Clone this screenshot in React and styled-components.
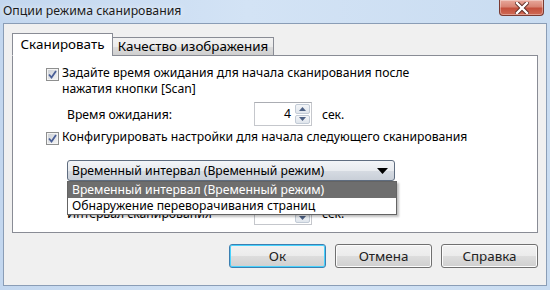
import React from 'react';
import styled, { createGlobalStyle } from 'styled-components';

const GlobalStyle = createGlobalStyle`
  html, body { margin: 0; padding: 0; }
  body {
    width: 550px;
    height: 290px;
    overflow: hidden;
    font-family: "Noto Sans", "Open Sans", sans-serif;
    font-size: 12px;
    color: #000;
  }
`;

const Window = styled.div`
  width: 550px;
  height: 290px;
  box-sizing: border-box;
  display: flex;
  flex-direction: column;
  background: linear-gradient(to right, #c3d7ef 0%, #d3e3f5 45%, #c9dcf1 100%);
`;

const TitleBar = styled.div`
  height: 23px;
  display: flex;
  align-items: flex-start;
  justify-content: space-between;
  padding-left: 3px;
  padding-right: 4px;
`;

const Title = styled.div`
  line-height: 22px;
  font-size: 12.3px;
  color: #1b1b1b;
  text-shadow: 0 0 6px rgba(255, 255, 255, 0.9);
`;

const CloseButton = styled.div`
  width: 43px;
  height: 15px;
  margin-right: 2px;
  border: 1px solid #7a3a31;
  border-top: none;
  border-radius: 0 0 4px 4px;
  background: linear-gradient(to bottom, #e8a89c 0%, #d88373 45%, #c4503d 55%, #cf6a55 100%);
  box-shadow: inset 0 0 0 1px rgba(255, 255, 255, 0.35);
  display: flex;
  align-items: center;
  justify-content: center;
`;

const Client = styled.div`
  flex: 1;
  margin: 0 3px 4px 3px;
  border: 1px solid #8a9db6;
  background: #f0f0f0;
  padding: 9px 8px 0 8px;
  display: flex;
  flex-direction: column;
`;

const TabStrip = styled.div`
  display: flex;
  align-items: flex-end;
  height: 23px;
  position: relative;
  z-index: 1;
`;

const Tab = styled.div`
  box-sizing: border-box;
  height: ${p => (p.$active ? '23px' : '19px')};
  width: ${p => p.$w}px;
  text-align: center;
  border: 1px solid #898c95;
  border-bottom: ${p => (p.$active ? '1px solid #fff' : '1px solid #898c95')};
  margin-left: ${p => (p.$active ? '0' : '-1px')};
  background: ${p => (p.$active ? '#fff' : 'linear-gradient(to bottom, #f2f2f2 0%, #ebebeb 50%, #dddddd 51%, #cfcfcf 100%)')};
  line-height: ${p => (p.$active ? '21px' : '17px')};
  font-size: 13.4px;
  white-space: nowrap;
`;

const Panel = styled.div`
  box-sizing: border-box;
  width: 526px;
  height: 178px;
  margin-top: -1px;
  border: 1px solid #898c95;
  background: #fff;
  padding: 11px 0 0 33px;
  display: flex;
  flex-direction: column;
`;

const CheckRow = styled.div`
  display: flex;
  align-items: flex-start;
  gap: 3px;
  margin-top: ${p => p.$mt || 0}px;
`;

const Box = styled.div`
  box-sizing: border-box;
  width: 13px;
  height: 13px;
  margin-top: 1px;
  flex: none;
  border: 1px solid #8e8f8f;
  background: linear-gradient(135deg, #cbcfd5 0%, #f6f6f6 100%);
  box-shadow: inset 0 0 0 1px #f4f4f4;
  display: flex;
  align-items: center;
  justify-content: center;
`;

const CheckText = styled.div`
  line-height: 16px;
  margin-top: -2px;
  font-size: 12.2px;
`;

const FieldRow = styled.div`
  display: flex;
  align-items: center;
  margin-left: 21px;
  margin-top: ${p => p.$mt || 0}px;
  height: 24px;
  font-size: 12.2px;
`;

const FieldLabel = styled.div`
  width: 187px;
`;

const Spinner = styled.div`
  display: flex;
  width: 58px;
  height: 24px;
  box-sizing: border-box;
  border: 1px solid #c5c7cc;
  border-top-color: #abadb3;
  background: #fff;
`;

const SpinValue = styled.div`
  flex: 1;
  text-align: right;
  padding-right: 3px;
  line-height: 22px;
`;

const SpinButtons = styled.div`
  width: 15px;
  display: flex;
  flex-direction: column;
  gap: 1px;
  padding: 1px;
`;

const SpinButton = styled.div`
  flex: 1;
  border: 1px solid #c2cbd6;
  border-radius: 2px;
  background: linear-gradient(to bottom, #f3f5f8 0%, #dfe5ec 100%);
  display: flex;
  align-items: center;
  justify-content: center;
`;

const Unit = styled.div`
  margin-left: 10px;
`;

const ComboWrap = styled.div`
  position: relative;
  margin-left: 21px;
  margin-top: 15px;
  width: 328px;
  font-size: 12.2px;
  z-index: 2;
`;

const Combo = styled.div`
  box-sizing: border-box;
  height: 21px;
  border: 1px solid #5f6d80;
  border-radius: 3px;
  background: linear-gradient(to bottom, #f2f4f7 0%, #e8ebef 50%, #d6dbe2 51%, #c9cfd8 100%);
  display: flex;
  align-items: center;
  justify-content: space-between;
  padding: 0 6px 0 4px;
`;

const DropList = styled.div`
  position: absolute;
  top: 21px;
  left: 0;
  width: 330px;
  box-sizing: border-box;
  border: 1px solid #646464;
  background: #fff;
  box-shadow: 2px 2px 2px rgba(0, 0, 0, 0.25);
`;

const DropItem = styled.div`
  height: 16px;
  line-height: 16px;
  padding-left: 4px;
  color: ${p => (p.$selected ? '#fff' : '#000')};
  background: ${p => (p.$selected ? '#6e6e6e' : 'transparent')};
`;

const ButtonRow = styled.div`
  display: flex;
  justify-content: flex-end;
  gap: 9px;
  margin-top: 11px;
  width: 526px;
`;

const Button = styled.div`
  box-sizing: border-box;
  width: ${p => p.$w}px;
  height: 24px;
  border: 1px solid ${p => (p.$default ? '#3c7fb1' : '#707070')};
  border-radius: 3px;
  background: linear-gradient(to bottom, #f2f2f2 0%, #ebebeb 50%, #dddddd 51%, #cfcfcf 100%);
  box-shadow: ${p => (p.$default ? 'inset 0 0 0 1px #48d2fd' : 'inset 0 0 0 1px #fcfcfc')};
  display: flex;
  align-items: center;
  justify-content: center;
  font-size: 13.4px;
  color: #222;
`;

const Check = () => (
  <Box>
    <svg width="9" height="9" viewBox="0 0 9 9">
      <path d="M1 4.5 L3.5 7.5 L8 1" fill="none" stroke="#4a5f97" strokeWidth="1.8" />
    </svg>
  </Box>
);

const Arrow = ({ up }) => (
  <svg width="7" height="4" viewBox="0 0 7 4">
    <path d={up ? 'M0 4 L3.5 0 L7 4 Z' : 'M0 0 L7 0 L3.5 4 Z'} fill="#4d6185" />
  </svg>
);

const SpinBox = ({ value }) => (
  <Spinner>
    <SpinValue>{value}</SpinValue>
    <SpinButtons>
      <SpinButton><Arrow up /></SpinButton>
      <SpinButton><Arrow /></SpinButton>
    </SpinButtons>
  </Spinner>
);

export default function App() {
  return (
    <>
      <GlobalStyle />
      <Window>
        <TitleBar>
          <Title>Опции режима сканирования</Title>
          <CloseButton>
            <svg width="14" height="12" viewBox="0 0 14 12">
              <path d="M2 1 L12 11 M12 1 L2 11" stroke="#5a2a24" strokeWidth="4.2" strokeLinecap="square" />
              <path d="M2 1 L12 11 M12 1 L2 11" stroke="#fff" strokeWidth="2.4" strokeLinecap="square" />
            </svg>
          </CloseButton>
        </TitleBar>
        <Client>
          <TabStrip>
            <Tab $active $w={101}>Сканировать</Tab>
            <Tab $w={162}>Качество изображения</Tab>
          </TabStrip>
          <Panel>
            <CheckRow>
              <Check />
              <CheckText>
                Задайте время ожидания для начала сканирования после
                <br />
                нажатия кнопки [Scan]
              </CheckText>
            </CheckRow>
            <FieldRow $mt={5}>
              <FieldLabel>Время ожидания:</FieldLabel>
              <SpinBox value="4" />
              <Unit>сек.</Unit>
            </FieldRow>
            <CheckRow $mt={5}>
              <Check />
              <CheckText>Конфигурировать настройки для начала следующего сканирования</CheckText>
            </CheckRow>
            <ComboWrap>
              <Combo>
                <span>Временный интервал (Временный режим)</span>
                <svg width="11" height="6" viewBox="0 0 11 6">
                  <path d="M0 0 L11 0 L5.5 6 Z" fill="#000" />
                </svg>
              </Combo>
              <DropList>
                <DropItem $selected>Временный интервал (Временный режим)</DropItem>
                <DropItem>Обнаружение переворачивания страниц</DropItem>
              </DropList>
            </ComboWrap>
            <FieldRow $mt={20}>
              <FieldLabel>Интервал сканирования</FieldLabel>
              <SpinBox value="" />
              <Unit>сек.</Unit>
            </FieldRow>
          </Panel>
          <ButtonRow>
            <Button $w={97} $default>Ок</Button>
            <Button $w={97}>Отмена</Button>
            <Button $w={97}>Справка</Button>
          </ButtonRow>
        </Client>
      </Window>
    </>
  );
}
